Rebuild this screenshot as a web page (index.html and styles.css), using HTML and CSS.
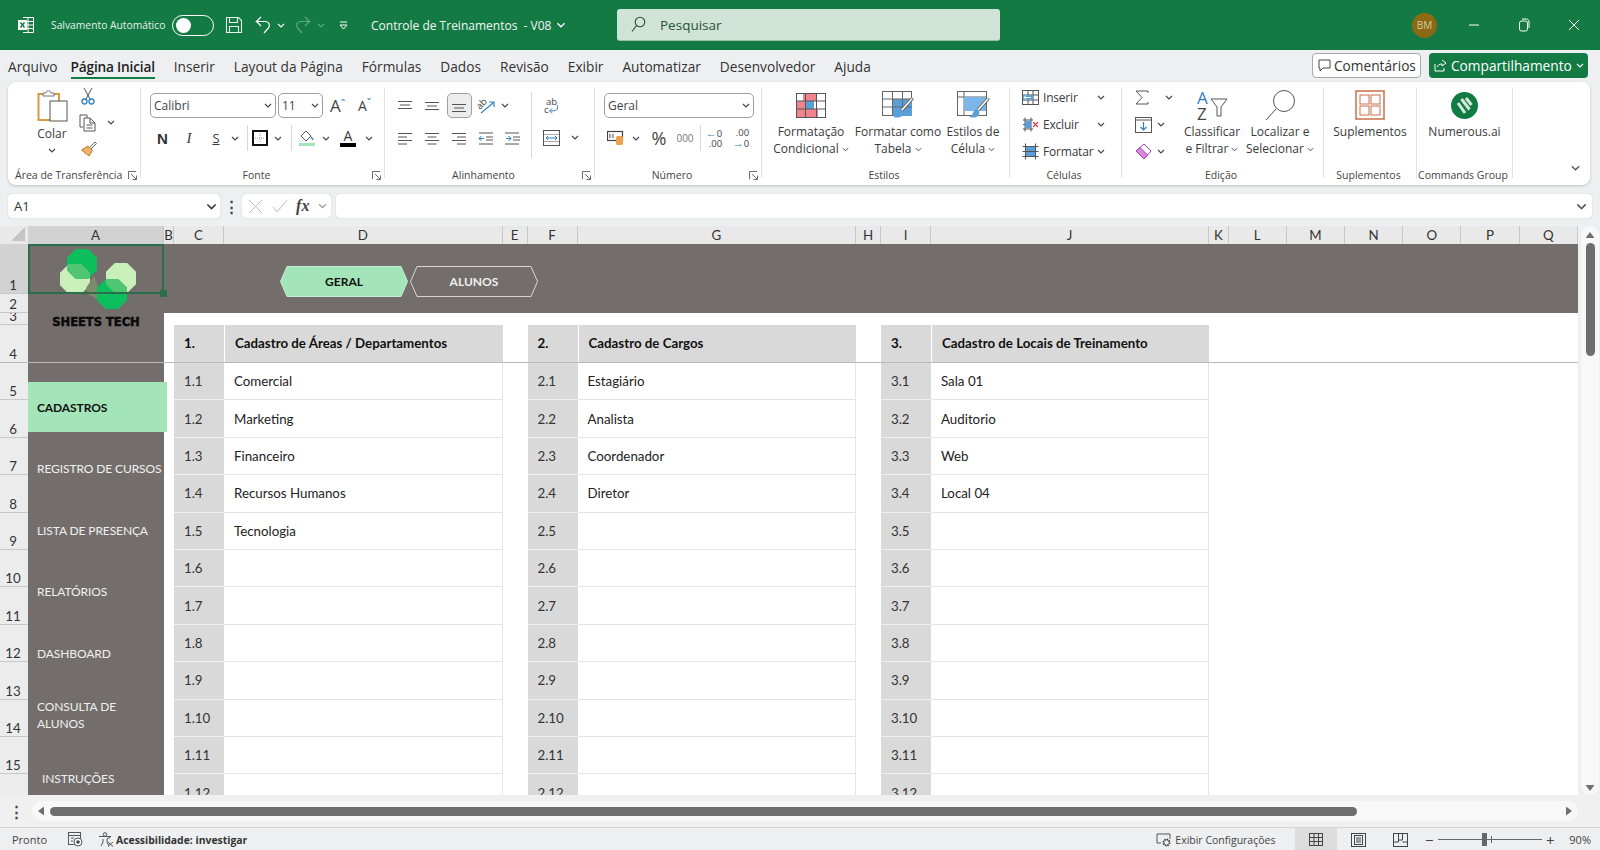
FILE: index.html
```html
<!DOCTYPE html>
<html>
<head>
  <title>Controle de Treinamentos - V08</title>
  <meta charset="UTF-8">
  <link rel="stylesheet" href="styles.css">
</head>
<body>
  <svg class="defs" width="0" height="0">
    <symbol id="chev" viewBox="0 0 8 5"><path d="M1 1l3 3 3-3" fill="none" stroke="currentColor" stroke-width="1.1"/></symbol>
    <symbol id="launch" viewBox="0 0 10 10"><path d="M.5 9V.5H9M3.5 3.5l5.5 5.5M5 9.5h4.5V5" fill="none" stroke="#555" stroke-width="1"/></symbol>
    <symbol id="brush" viewBox="0 0 20 20"><path d="M18 1L9 11" stroke="#666" stroke-width="3" stroke-linecap="round"/><path d="M18 1L9 11" stroke="#fff" stroke-width="1.4" stroke-linecap="round"/><path d="M8 10c-3 .5-3 3-4 5-.6 1-2 1.600-3 2 3 1.500 8 1 9-2 .5-1.500 .5-3-2-5z" fill="#5a9fd8"/></symbol>
  </svg>

  <div class="titlebar">
    <svg class="xl" width="18" height="18" viewBox="0 0 18 18"><path d="M6 1.500h10.500v15H6" fill="none" stroke="#fff"/><path d="M6 5.500h10.500M6 9h10.500M6 12.500h10.500M11 1.500v15" stroke="#fff"/><rect x="1" y="4" width="9" height="10" fill="#fff"/><path d="M3.500 6.500l4 5M7.500 6.500l-4 5" stroke="#107c41" stroke-width="1.400"/></svg>
    <span class="autosave">Salvamento Automático</span>
    <span class="toggle"><span class="toggle-dot"></span></span>
    <svg class="save" width="18" height="18" viewBox="0 0 18 18"><path d="M1.500 1.500h12l3 3v12h-15zM4.500 1.500v5h8v-5M4.500 16.500v-6h9v6" fill="none" stroke="#e6f2ea" stroke-width="1.100"/></svg>
    <svg class="undo" width="16" height="18" viewBox="0 0 16 18"><path d="M6 1L1.500 5.500h9c3.500 0 5 4 3 6.500L9 17M1.500 5.500L6 10" fill="none" stroke="#fff" stroke-width="1.200"/></svg>
    <svg class="tchev" width="8" height="5"><use href="#chev"/></svg>
    <svg class="redo" width="16" height="18" viewBox="0 0 16 18"><path d="M10 1l4.500 4.500h-9c-3.500 0-5 4-3 6.500L7 17M14.500 5.500L10 10" fill="none" stroke="#5fa880" stroke-width="1.200"/></svg>
    <svg class="tchev dim" width="8" height="5"><use href="#chev"/></svg>
    <svg class="qat" width="9" height="9" viewBox="0 0 9 9"><path d="M1 1h7M1 4l3.500 4L8 4z" fill="none" stroke="#fff"/></svg>
    <span class="doc-title">Controle de Treinamentos&nbsp; - V08</span>
    <svg class="tchev doc-chev" width="10" height="6"><use href="#chev"/></svg>
    <div class="search">
      <svg width="15" height="17" viewBox="0 0 15 17"><circle cx="9" cy="6" r="4.800" fill="none" stroke="#234f37" stroke-width="1.100"/><path d="M5.500 9.500L1 15.500" stroke="#234f37" stroke-width="1.100"/></svg>
      <span>Pesquisar</span>
    </div>
    <div class="win-right">
      <span class="avatar">BM</span>
      <svg class="win-btn" width="12" height="12" viewBox="0 0 12 12"><path d="M1 6h10" stroke="#fff"/></svg>
      <svg class="win-btn" width="12" height="14" viewBox="0 0 12 14"><rect x="1.500" y="3" width="8" height="10" rx="2" fill="none" stroke="#fff"/><path d="M4 1h4c2 0 3 1 3 3v6" fill="none" stroke="#fff"/></svg>
      <svg class="win-btn" width="12" height="12" viewBox="0 0 12 12"><path d="M1 1l10 10M11 1L1 11" stroke="#fff"/></svg>
    </div>
  </div>

  <div class="menubar">
    <span class="tab first">Arquivo</span>
    <span class="tab active">Página Inicial</span>
    <span class="tab">Inserir</span>
    <span class="tab">Layout da Página</span>
    <span class="tab">Fórmulas</span>
    <span class="tab">Dados</span>
    <span class="tab">Revisão</span>
    <span class="tab">Exibir</span>
    <span class="tab">Automatizar</span>
    <span class="tab">Desenvolvedor</span>
    <span class="tab">Ajuda</span>
    <div class="menu-right">
      <div class="btn-comment">
        <svg width="13" height="13" viewBox="0 0 13 13"><path d="M1 1h11v8H5l-3 3V9H1z" fill="none" stroke="#444"/></svg>
        Comentários
      </div>
      <div class="btn-share">
        <svg width="13" height="13" viewBox="0 0 13 13"><path d="M8 1l4 3-4 3V5C5 5 4 6 3.500 8M1 5v7h9V9" fill="none" stroke="#fff"/></svg>
        Compartilhamento
        <svg width="8" height="5"><use href="#chev"/></svg>
      </div>
    </div>
  </div>

  <div class="ribbon">
    <div class="grp g-clip">
      <div class="grp-body">
        <div class="big colar">
          <div class="big-ico">
            <svg width="31" height="33" viewBox="0 0 31 33"><path d="M7 5H1.500v26H13" fill="none" stroke="#d99a45" stroke-width="2"/><path d="M17 5h5v7" fill="none" stroke="#d99a45" stroke-width="2"/><path d="M6 6V4h3c0-3 5-3 5 0h3v3H6z" fill="#fff" stroke="#777"/><rect x="13" y="12" width="17" height="20" fill="#fff" stroke="#555"/></svg>
          </div>
          <div class="big-txt">Colar</div>
          <svg class="c" width="8" height="5"><use href="#chev"/></svg>
        </div>
        <div class="stack clip-stack">
          <svg width="14" height="18" viewBox="0 0 14 18"><path d="M3 1l6 11M11 1L5 12" stroke="#555"/><circle cx="3.500" cy="14.500" r="2.500" fill="none" stroke="#2f7fc1" stroke-width="1.300"/><circle cx="10.500" cy="14.500" r="2.500" fill="none" stroke="#2f7fc1" stroke-width="1.300"/></svg>
          <span></span>
          <svg width="18" height="18" viewBox="0 0 18 18"><path d="M4 13H1V1h7v3" fill="none" stroke="#555"/><path d="M5 4h6l5 5v8H5zM11 4v5h5M7.500 11h6M7.500 14h6" fill="#fff" stroke="#555"/></svg>
          <svg class="c" width="8" height="5"><use href="#chev"/></svg>
          <svg width="17" height="17" viewBox="0 0 17 17"><path d="M9 7l6-6 1.500 1.500-6 6" fill="#fff" stroke="#666"/><path d="M8 5l4.500 4.500L9 15 1.500 9z" fill="#f0b268" stroke="#b97a2c"/></svg>
          <span></span>
        </div>
      </div>
      <div class="grp-label"><span class="lab-left">Área de Transferência</span><svg class="launch" width="9" height="9"><use href="#launch"/></svg></div>
    </div>

    <div class="grp g-font">
      <div class="grp-body pad-rows">
        <div class="row font-r1">
          <div class="select sel-font">Calibri<svg class="c" width="8" height="5"><use href="#chev"/></svg></div>
          <div class="select sel-size">11<svg class="c" width="8" height="5"><use href="#chev"/></svg></div>
          <span class="grow-a">A<sup>ˆ</sup></span>
          <span class="shrink-a">A<sup>ˇ</sup></span>
        </div>
        <div class="row font-r2">
          <b class="fmt-n">N</b>
          <i class="fmt-i">I</i>
          <span class="fmt-s">S</span>
          <svg class="c" width="8" height="5"><use href="#chev"/></svg>
          <span class="vsep"></span>
          <svg width="16" height="16" viewBox="0 0 16 16"><rect x="1" y="1" width="14" height="14" fill="none" stroke="#111" stroke-width="2"/><path d="M8 3v10M3 8h10" stroke="#999" stroke-dasharray="1 1"/></svg>
          <svg class="c" width="8" height="5"><use href="#chev"/></svg>
          <span class="vsep"></span>
          <svg width="18" height="18" viewBox="0 0 18 18"><path d="M8 2l5 5-5 5-5-5z" fill="none" stroke="#555"/><path d="M13 8c1 1 2 2 2 3" stroke="#2f7fc1" stroke-width="1.300" fill="none"/><rect x="1" y="14" width="16" height="3" fill="#a3e4b8"/></svg>
          <svg class="c" width="8" height="5"><use href="#chev"/></svg>
          <span class="font-color">A</span>
          <svg class="c" width="8" height="5"><use href="#chev"/></svg>
        </div>
      </div>
      <div class="grp-label"><span class="lab-mid">Fonte</span><svg class="launch" width="9" height="9"><use href="#launch"/></svg></div>
    </div>

    <div class="grp g-align">
      <div class="grp-body">
        <div class="align-left">
          <div class="row align-r1">
            <svg width="14" height="12" viewBox="0 0 14 12"><path d="M0 1.500h14M2 5h10M0 8.500h14" stroke="#555"/></svg>
            <svg width="14" height="12" viewBox="0 0 14 12"><path d="M0 2.500h14M2 6h10M0 9.500h14" stroke="#555"/></svg>
            <span class="hl-btn"><svg width="14" height="12" viewBox="0 0 14 12"><path d="M0 4.500h14M2 8h10M0 11.500h14" stroke="#555"/></svg></span>
            <svg class="open" width="18" height="16" viewBox="0 0 18 16"><text x="0" y="9" class="orient-t" transform="rotate(-45 5 7)">ab</text><path d="M4 15L16 5M12 4h5v5" fill="none" stroke="#2f7fc1" stroke-width="1.200"/></svg>
            <svg class="c" width="8" height="5"><use href="#chev"/></svg>
          </div>
          <div class="row align-r2">
            <svg width="14" height="13" viewBox="0 0 14 13"><path d="M0 1.500h14M0 5h9M0 8.500h14M0 12h9" stroke="#555"/></svg>
            <svg width="14" height="13" viewBox="0 0 14 13"><path d="M0 1.500h14M2.500 5h9M0 8.500h14M2.500 12h9" stroke="#555"/></svg>
            <svg width="14" height="13" viewBox="0 0 14 13"><path d="M0 1.500h14M5 5h9M0 8.500h14M5 12h9" stroke="#555"/></svg>
            <svg width="15" height="13" viewBox="0 0 15 13"><path d="M1 1h14M8 5h7M8 8h7M1 12h14" stroke="#555"/><path d="M6 6.500H1M3.500 4L1 6.500 3.500 9" fill="none" stroke="#2f7fc1"/></svg>
            <svg width="15" height="13" viewBox="0 0 15 13"><path d="M0 1h14M8 5h7M8 8h7M0 12h14" stroke="#555"/><path d="M1 6.500h5M3.500 4L6 6.500 3.500 9" fill="none" stroke="#2f7fc1"/></svg>
          </div>
        </div>
        <span class="vsep tall"></span>
        <div class="align-right">
          <svg class="open" width="16" height="18" viewBox="0 0 16 18"><text x="3" y="8" class="wrap-t">ab</text><text x="1" y="16" class="wrap-t">c</text><path d="M14 8c2 5-1 6-7 6M9 11.500L6.500 14 9 16.500" fill="none" stroke="#2f7fc1"/></svg>
          <span></span>
          <svg width="17" height="16" viewBox="0 0 17 16"><rect x=".5" y=".5" width="16" height="15" fill="none" stroke="#555"/><path d="M.5 5h16M.5 11h16" stroke="#555"/><rect x="1" y="5" width="15" height="6" fill="#fff"/><path d="M3 8h11M5 6L3 8l2 2M12 6l2 2-2 2" fill="none" stroke="#2f7fc1"/></svg>
          <svg class="c" width="8" height="5"><use href="#chev"/></svg>
        </div>
      </div>
      <div class="grp-label"><span class="lab-mid">Alinhamento</span><svg class="launch" width="9" height="9"><use href="#launch"/></svg></div>
    </div>

    <div class="grp g-num">
      <div class="grp-body pad-rows">
        <div class="row num-r1"><div class="select sel-num">Geral<svg class="c" width="8" height="5"><use href="#chev"/></svg></div></div>
        <div class="row num-r2">
          <svg width="18" height="16" viewBox="0 0 18 16"><rect x=".5" y="1.500" width="15" height="9" fill="none" stroke="#444" stroke-width="1.200"/><path d="M3 4v4M6 4v4" stroke="#444"/><rect x="9" y="6" width="7" height="9" rx="1.500" fill="#eda24a"/></svg>
          <svg class="c" width="8" height="5"><use href="#chev"/></svg>
          <span class="pct">%</span>
          <span class="thou">000</span>
          <span class="vsep"></span>
          <span class="dec"><span class="dec-a">←</span>0<br>.00</span>
          <span class="dec">.00<br><span class="dec-a">→</span>0</span>
        </div>
      </div>
      <div class="grp-label"><span class="lab-mid">Número</span><svg class="launch" width="9" height="9"><use href="#launch"/></svg></div>
    </div>

    <div class="grp g-style">
      <div class="grp-body">
        <div class="big b-cond">
          <div class="big-ico">
            <svg width="30" height="25" viewBox="0 0 30 25"><rect x=".5" y=".5" width="29" height="24" fill="#fff" stroke="#555"/><rect x="7" y="1" width="13" height="7" fill="#f0848c"/><rect x="1" y="8" width="8" height="8" fill="#f0848c"/><rect x="9" y="8" width="9" height="8" fill="#5a9fd8"/><rect x="1" y="16" width="21" height="8" fill="#f0848c"/><path d="M.5 8h29M.5 16h29M9.500 .5v24M20.500 .5v24" stroke="#555"/></svg>
          </div>
          <div class="big-txt">Formatação<br>Condicional <svg width="7" height="5"><use href="#chev"/></svg></div>
        </div>
        <div class="big b-tab">
          <div class="big-ico">
            <svg width="32" height="29" viewBox="0 0 32 29"><rect x=".5" y=".5" width="29" height="24" fill="#fff" stroke="#666"/><rect x="11" y="8" width="19" height="17" fill="#5a9fd8"/><path d="M.5 8h29M.5 16h29M10.500 .5v24M20.500 .5v24" stroke="#666"/><use href="#brush" x="10" y="7" width="22" height="22"/></svg>
          </div>
          <div class="big-txt">Formatar como<br>Tabela <svg width="7" height="5"><use href="#chev"/></svg></div>
        </div>
        <div class="big b-cell">
          <div class="big-ico">
            <svg width="33" height="29" viewBox="0 0 33 29"><rect x=".5" y=".5" width="29" height="24" fill="#fff" stroke="#666"/><path d="M.5 6h29M7 .5v24" stroke="#666"/><rect x="7" y="6" width="22" height="14" fill="#7db6e6"/><use href="#brush" x="11" y="7" width="22" height="22"/></svg>
          </div>
          <div class="big-txt">Estilos de<br>Célula <svg width="7" height="5"><use href="#chev"/></svg></div>
        </div>
      </div>
      <div class="grp-label"><span class="lab-mid">Estilos</span></div>
    </div>

    <div class="grp g-cells">
      <div class="grp-body">
        <div class="stack cells-stack">
          <svg width="17" height="15" viewBox="0 0 17 15"><rect x=".5" y=".5" width="16" height="14" fill="#fff" stroke="#555"/><path d="M.5 5h16M.5 10h16M6 .5v14M11 .5v14" stroke="#555"/><rect x="1" y="5" width="10" height="5" fill="#5a9fd8"/><path d="M9 7.500H2M4 5.500l-2 2 2 2" fill="none" stroke="#fff"/></svg>
          <span>Inserir</span>
          <svg class="c" width="8" height="5"><use href="#chev"/></svg>
          <svg width="17" height="15" viewBox="0 0 17 15"><path d="M1 3h10M1 12h10M3 .5v14M9 .5v14M1 7.500h7" stroke="#555" fill="none"/><rect x="3" y="4" width="6" height="7" fill="#5a9fd8"/><path d="M11 5l5 5M16 5l-5 5" stroke="#d8434a" stroke-width="1.200"/></svg>
          <span>Excluir</span>
          <svg class="c" width="8" height="5"><use href="#chev"/></svg>
          <svg width="17" height="17" viewBox="0 0 17 17"><rect x="3.500" y="3.500" width="10" height="10" fill="#5a9fd8" stroke="#555"/><path d="M.5 3.500h16M.5 8.500h16M.5 13.500h16M3.500 .5v16M13.500 .5v16" stroke="#555"/></svg>
          <span>Formatar</span>
          <svg class="c" width="8" height="5"><use href="#chev"/></svg>
        </div>
      </div>
      <div class="grp-label"><span class="lab-mid">Células</span></div>
    </div>

    <div class="grp g-edit">
      <div class="grp-body">
        <div class="stack edit-stack">
          <svg width="14" height="15" viewBox="0 0 14 15"><path d="M13 3V1H1l6 6.500L1 14h12v-2" fill="none" stroke="#555"/></svg>
          <svg class="c sum-c" width="8" height="5"><use href="#chev"/></svg>
          <svg width="17" height="16" viewBox="0 0 17 16"><rect x=".5" y=".5" width="16" height="15" fill="#fff" stroke="#555"/><path d="M.5 3h16" stroke="#555"/><path d="M8.500 5v8M5.500 10l3 3 3-3" fill="none" stroke="#2f7fc1" stroke-width="1.200"/></svg>
          <svg class="c" width="8" height="5"><use href="#chev"/></svg>
          <svg width="17" height="17" viewBox="0 0 17 17"><path d="M9 1l7 7-7 8-8-8z" fill="#fff" stroke="#a53fb0"/><path d="M5 4.500l7.500 7.500L9 16 1 8z" fill="#d889de" stroke="#a53fb0"/></svg>
          <svg class="c" width="8" height="5"><use href="#chev"/></svg>
        </div>
        <div class="big b-sort">
          <div class="big-ico">
            <svg class="open" width="31" height="31" viewBox="0 0 31 31"><text x="0" y="14" class="az az-a">A</text><text x="0" y="30" class="az">Z</text><path d="M14 9h16l-6 8v9h-4v-9z" fill="none" stroke="#555"/></svg>
          </div>
          <div class="big-txt">Classificar<br>e Filtrar <svg width="7" height="5"><use href="#chev"/></svg></div>
        </div>
        <div class="big b-find">
          <div class="big-ico">
            <svg width="31" height="31" viewBox="0 0 31 31"><circle cx="19" cy="11" r="10.500" fill="none" stroke="#555"/><path d="M11 19L1 30" stroke="#555"/></svg>
          </div>
          <div class="big-txt">Localizar e<br>Selecionar <svg width="7" height="5"><use href="#chev"/></svg></div>
        </div>
      </div>
      <div class="grp-label"><span class="lab-mid">Edição</span></div>
    </div>

    <div class="grp g-addin">
      <div class="grp-body">
        <div class="big b-addin">
          <div class="big-ico">
            <svg width="30" height="30" viewBox="0 0 30 30"><rect x="1" y="1" width="28" height="28" fill="#fff" stroke="#c9704a" stroke-width="1.500"/><rect x="5" y="5" width="9" height="9" fill="none" stroke="#c9704a"/><rect x="16" y="5" width="9" height="9" fill="none" stroke="#c9704a"/><rect x="5" y="16" width="9" height="9" fill="none" stroke="#c9704a"/><rect x="16" y="16" width="9" height="9" fill="none" stroke="#c9704a"/></svg>
          </div>
          <div class="big-txt">Suplementos</div>
        </div>
      </div>
      <div class="grp-label"><span class="lab-mid">Suplementos</span></div>
    </div>

    <div class="grp g-cmd">
      <div class="grp-body">
        <div class="big b-cmd">
          <div class="big-ico">
            <svg width="27" height="27" viewBox="0 0 27 27"><circle cx="13.500" cy="13.500" r="13.500" fill="#107c41"/><path d="M7 11l7 10M10.500 7l8 10.500M15 6l5.500 7" fill="none" stroke="#d5e8dc" stroke-width="3"/></svg>
          </div>
          <div class="big-txt">Numerous.ai</div>
        </div>
      </div>
      <div class="grp-label"><span class="lab-mid">Commands Group</span></div>
    </div>

    <div class="grp-end"><svg width="11" height="6"><use href="#chev"/></svg></div>
  </div>

  <div class="formulabar">
    <div class="namebox">A1<svg width="11" height="7"><use href="#chev"/></svg></div>
    <span class="dots">⋮</span>
    <div class="fxbox">
      <svg width="15" height="15" viewBox="0 0 15 15"><path d="M1 1l13 13M14 1L1 14" stroke="#bbb"/></svg>
      <svg width="16" height="14" viewBox="0 0 16 14"><path d="M1 8l4 5L15 1" fill="none" stroke="#bbb"/></svg>
      <i class="fx">fx</i>
      <svg width="9" height="6"><use href="#chev"/></svg>
    </div>
    <div class="fxinput"><svg width="13" height="7"><use href="#chev"/></svg></div>
  </div>

  <div class="sheet-row">
    <div class="sheet">
      <div class="corner"><span class="corner-tri"></span></div>
      <div class="ch sel">A</div><div class="ch">B</div><div class="ch">C</div><div class="ch">D</div><div class="ch">E</div><div class="ch">F</div><div class="ch">G</div><div class="ch">H</div><div class="ch">I</div><div class="ch">J</div><div class="ch">K</div><div class="ch">L</div><div class="ch">M</div><div class="ch">N</div><div class="ch">O</div><div class="ch">P</div><div class="ch">Q</div>

      <div class="band">
        <div class="nav-tab on">
          <svg viewBox="0 0 128 31" preserveAspectRatio="none"><polygon points="7,.5 121,.5 127.500,15.500 121,30.500 7,30.500 .5,15.500" fill="#a3e4b8" stroke="#c5efd2"/></svg>
          <span>GERAL</span>
        </div>
        <div class="nav-tab">
          <svg viewBox="0 0 128 31" preserveAspectRatio="none"><polygon points="7,.5 121,.5 127.500,15.500 121,30.500 7,30.500 .5,15.500" fill="none" stroke="#d8d6d4"/></svg>
          <span>ALUNOS</span>
        </div>
      </div>

      <div class="side">
        <svg class="logo" width="137" height="70" viewBox="0 0 137 70">
          <defs>
            <polygon id="oct" points="-6.200,-15 6.200,-15 15,-6.200 15,6.200 6.200,15 -6.200,15 -15,6.200 -15,-6.200"/>
            <clipPath id="clipL"><use href="#oct" x="47" y="35"/></clipPath>
            <clipPath id="clipR"><use href="#oct" x="93" y="34"/></clipPath>
          </defs>
          <use href="#oct" x="47" y="35" fill="#c9efbb"/>
          <use href="#oct" x="93" y="34" fill="#c9efbb"/>
          <polygon points="58,44 66,32 72,47 70,56 60,50" fill="#7e8b6a"/>
          <use href="#oct" x="54" y="20" fill="#0cbf5c"/>
          <use href="#oct" x="84" y="50" fill="#0cbf5c"/>
          <g clip-path="url(#clipL)"><use href="#oct" x="54" y="20" fill="#50c672"/></g>
          <g clip-path="url(#clipR)"><use href="#oct" x="84" y="50" fill="#50c672"/></g>
        </svg>
        <div class="brand">SHEETS TECH</div>
        <div class="nav on">CADASTROS</div>
        <div class="nav">REGISTRO DE CURSOS</div>
        <div class="nav">LISTA DE PRESENÇA</div>
        <div class="nav">RELATÓRIOS</div>
        <div class="nav">DASHBOARD</div>
        <div class="nav">CONSULTA DE<br>ALUNOS</div>
        <div class="nav indent">INSTRUÇÕES</div>
      </div>

      <div class="rh sel">1</div>
      <div class="rh">2</div>
      <div class="rh">3</div>

      <div class="rh">4</div>
      <div class="hn c-c">1.</div><div class="ht c-d">Cadastro de Áreas / Departamentos</div>
      <div class="hn c-f">2.</div><div class="ht c-g">Cadastro de Cargos</div>
      <div class="hn c-i">3.</div><div class="ht c-j">Cadastro de Locais de Treinamento</div>

      <div class="rh">5</div>
      <div class="cn c-c">1.1</div><div class="ct c-d">Comercial</div>
      <div class="cn c-f">2.1</div><div class="ct c-g">Estagiário</div>
      <div class="cn c-i">3.1</div><div class="ct c-j">Sala 01</div>

      <div class="rh">6</div>
      <div class="cn c-c">1.2</div><div class="ct c-d">Marketing</div>
      <div class="cn c-f">2.2</div><div class="ct c-g">Analista</div>
      <div class="cn c-i">3.2</div><div class="ct c-j">Auditorio</div>

      <div class="rh">7</div>
      <div class="cn c-c">1.3</div><div class="ct c-d">Financeiro</div>
      <div class="cn c-f">2.3</div><div class="ct c-g">Coordenador</div>
      <div class="cn c-i">3.3</div><div class="ct c-j">Web</div>

      <div class="rh">8</div>
      <div class="cn c-c">1.4</div><div class="ct c-d">Recursos Humanos</div>
      <div class="cn c-f">2.4</div><div class="ct c-g">Diretor</div>
      <div class="cn c-i">3.4</div><div class="ct c-j">Local 04</div>

      <div class="rh">9</div>
      <div class="cn c-c">1.5</div><div class="ct c-d">Tecnologia</div>
      <div class="cn c-f">2.5</div><div class="ct c-g"></div>
      <div class="cn c-i">3.5</div><div class="ct c-j"></div>

      <div class="rh">10</div>
      <div class="cn c-c">1.6</div><div class="ct c-d"></div>
      <div class="cn c-f">2.6</div><div class="ct c-g"></div>
      <div class="cn c-i">3.6</div><div class="ct c-j"></div>

      <div class="rh">11</div>
      <div class="cn c-c">1.7</div><div class="ct c-d"></div>
      <div class="cn c-f">2.7</div><div class="ct c-g"></div>
      <div class="cn c-i">3.7</div><div class="ct c-j"></div>

      <div class="rh">12</div>
      <div class="cn c-c">1.8</div><div class="ct c-d"></div>
      <div class="cn c-f">2.8</div><div class="ct c-g"></div>
      <div class="cn c-i">3.8</div><div class="ct c-j"></div>

      <div class="rh">13</div>
      <div class="cn c-c">1.9</div><div class="ct c-d"></div>
      <div class="cn c-f">2.9</div><div class="ct c-g"></div>
      <div class="cn c-i">3.9</div><div class="ct c-j"></div>

      <div class="rh">14</div>
      <div class="cn c-c">1.10</div><div class="ct c-d"></div>
      <div class="cn c-f">2.10</div><div class="ct c-g"></div>
      <div class="cn c-i">3.10</div><div class="ct c-j"></div>

      <div class="rh">15</div>
      <div class="cn c-c">1.11</div><div class="ct c-d"></div>
      <div class="cn c-f">2.11</div><div class="ct c-g"></div>
      <div class="cn c-i">3.11</div><div class="ct c-j"></div>

      <div class="rh"></div>
      <div class="cn c-c last">1.12</div><div class="ct c-d"></div>
      <div class="cn c-f last">2.12</div><div class="ct c-g"></div>
      <div class="cn c-i last">3.12</div><div class="ct c-j"></div>

      <div class="rule"></div>
      <div class="cell-sel"><span class="cell-handle"></span></div>
    </div>
    <div class="vscroll">
      <span class="arrow-up"></span>
      <span class="vthumb"></span>
      <span class="arrow-down"></span>
    </div>
  </div>

  <div class="hbar">
    <span class="dots hdots">⋮</span>
    <div class="htrack">
      <span class="arrow-left"></span>
      <span class="hthumb"></span>
      <span class="arrow-right"></span>
    </div>
  </div>

  <div class="statusbar">
    <span class="st-ready">Pronto</span>
    <svg class="st-macro" width="15" height="15" viewBox="0 0 15 15"><rect x=".5" y=".5" width="12" height="12" fill="none" stroke="#555"/><path d="M.5 3.500h12M3 6h3M3 9h2" stroke="#555"/><circle cx="10" cy="10" r="4" fill="#fff" stroke="#555"/><circle cx="10" cy="10" r="1.800" fill="#444"/></svg>
    <svg class="st-acc" width="16" height="15" viewBox="0 0 16 15"><circle cx="7" cy="2.500" r="1.800" fill="none" stroke="#555"/><path d="M1 4.500h12L9 7v3l2 4M5 7v3l-2 4" fill="none" stroke="#555"/><path d="M10 10l5 4.500M15 10l-5 4.500" stroke="#555"/></svg>
    <b class="st-acc-t">Acessibilidade: investigar</b>
    <div class="st-right">
      <svg width="16" height="14" viewBox="0 0 16 14"><path d="M5 10H1V1h13v5" fill="none" stroke="#555"/><circle cx="10.500" cy="9.500" r="3" fill="none" stroke="#333" stroke-width="1.800" stroke-dasharray="1.500 .8"/></svg>
      <span class="st-view">Exibir Configurações</span>
      <span class="view-btn on"><svg width="14" height="13" viewBox="0 0 14 13"><rect x=".5" y=".5" width="13" height="12" fill="none" stroke="#444"/><path d="M5 .5v12M9.500 .5v12M.5 4.500h13M.5 8.500h13" stroke="#444"/></svg></span>
      <span class="view-btn"><svg width="15" height="14" viewBox="0 0 15 14"><rect x=".5" y=".5" width="14" height="13" fill="none" stroke="#444"/><rect x="3.500" y="2.500" width="8" height="9" fill="none" stroke="#444"/><path d="M5 5h5M5 7h5M5 9h5" stroke="#444"/></svg></span>
      <span class="view-btn"><svg width="15" height="14" viewBox="0 0 15 14"><rect x=".5" y=".5" width="14" height="13" fill="none" stroke="#444"/><path d="M.5 9h5V.5M5.500 7h4V.5M9.500 9h5" fill="none" stroke="#444"/></svg></span>
      <span class="zoom-sign minus">−</span>
      <span class="slider"><span class="slider-mid"></span><span class="slider-knob"></span></span>
      <span class="zoom-sign">+</span>
      <span class="zoom-pct">90%</span>
    </div>
  </div>
</body>
</html>
```

FILE: styles.css
```css
* {
  margin: 0;
  padding: 0;
  box-sizing: border-box;
}

body {
  width: 1600px;
  height: 850px;
  overflow: hidden;
  font-family: "Open Sans", "Noto Sans", sans-serif;
  font-size: 12px;
  color: #3a3a3a;
  background: #eeeff1;
}

svg {
  flex-shrink: 0;
  display: block;
}

svg.open {
  overflow: visible;
}

.defs {
  position: absolute;
}

/* title bar */
.titlebar {
  height: 50px;
  background: #137a44;
  color: #fff;
  display: flex;
  align-items: center;
  padding-left: 17px;
}

.autosave {
  margin-left: 16px;
  width: 114px;
  font-size: 10.300px;
  white-space: nowrap;
  color: #e4f0e9;
}

.toggle {
  margin-left: 7px;
  width: 42px;
  height: 21px;
  border: 1px solid #fff;
  border-radius: 11px;
  padding: 2px 0 0 2px;
}

.toggle-dot {
  display: block;
  width: 15px;
  height: 15px;
  margin-left: 1px;
  border-radius: 50%;
  background: #fff;
}

.save {
  margin-left: 11px;
}

.undo {
  margin-left: 12px;
}

.tchev {
  margin-left: 6px;
  color: #fff;
}

.redo {
  margin-left: 10px;
}

.tchev.dim {
  color: #5fa880;
}

.qat {
  margin-left: 14px;
}

.doc-title {
  margin-left: 23px;
  width: 185px;
  font-size: 12px;
  white-space: nowrap;
  color: #f2f7f4;
}

.doc-chev {
  margin-left: 0;
}

.search {
  margin-left: 51px;
  width: 383px;
  height: 32px;
  background: #cfe3d6;
  border-radius: 3px;
  border-bottom: 1px solid #9dbdaa;
  display: flex;
  align-items: center;
  padding-left: 14px;
  gap: 14px;
  color: #27543b;
  font-size: 13.500px;
}

.win-right {
  margin-left: auto;
  display: flex;
  align-items: center;
}

.avatar {
  width: 25px;
  height: 25px;
  margin-right: 31px;
  border-radius: 50%;
  background: #8c6a14;
  color: #d5c8a0;
  font-size: 10px;
  display: flex;
  align-items: center;
  justify-content: center;
}

.win-btn {
  margin-right: 38px;
}

.win-btn:last-child {
  margin-right: 20px;
}

/* tabs */
.menubar {
  height: 32px;
  display: flex;
  align-items: flex-start;
  font-size: 13.700px;
  color: #333;
  padding: 1px 0 0 8px;
  gap: 19px;
}

.tab {
  white-space: nowrap;
  line-height: 32px;
  height: 28px;
}

.tab.first {
  margin-right: -6px;
}

.tab.active {
  font-weight: 600;
  letter-spacing: -0.2px;
  color: #222;
  border-bottom: 2px solid #107c41;
}

.menu-right {
  margin-left: auto;
  display: flex;
  gap: 8px;
  padding-right: 12px;
  padding-top: 2px;
}

.btn-comment,
.btn-share {
  height: 25px;
  border-radius: 4px;
  display: flex;
  align-items: center;
  white-space: nowrap;
}

.btn-comment {
  width: 109px;
  background: #fff;
  border: 1px solid #a8a8a8;
  padding-left: 5px;
  gap: 3px;
}

.btn-share {
  width: 159px;
  background: #137a44;
  color: #fff;
  padding-left: 5px;
  gap: 4px;
}

/* ribbon */
.ribbon {
  height: 103px;
  margin: 0 10px 0 8px;
  background: #fff;
  border-radius: 8px;
  box-shadow: 0 1px 3px rgba(0, 0, 0, 0.2);
  display: flex;
}

.grp {
  position: relative;
  display: flex;
  flex-direction: column;
}

.grp::after {
  content: "";
  position: absolute;
  right: 0;
  top: 6px;
  bottom: 7px;
  width: 1px;
  background: #e2e2e2;
}

.g-clip { width: 133px; }
.g-font { width: 244px; }
.g-align { width: 210px; }
.g-num { width: 167px; }
.g-style { width: 248px; }
.g-cells { width: 112px; }
.g-edit { width: 202px; }
.g-addin { width: 93px; }
.g-cmd { width: 96px; }

.grp-end {
  flex: 1;
  display: flex;
  align-items: flex-end;
  justify-content: flex-end;
  padding: 0 9px 14px 0;
  color: #555;
}

.grp-body {
  height: 84px;
  display: flex;
}

.grp-label {
  height: 18px;
  display: flex;
  align-items: center;
  font-size: 10.500px;
  color: #444;
  padding-right: 4px;
}

.lab-left {
  padding-left: 7px;
  flex: 1;
  white-space: nowrap;
}

.lab-mid {
  flex: 1;
  text-align: center;
  white-space: nowrap;
}

.c {
  color: #444;
}

.vsep {
  width: 1px;
  height: 26px;
  background: #d8d8d8;
}

.vsep.tall {
  height: 66px;
  margin-top: 10px;
}

.big {
  display: flex;
  flex-direction: column;
  align-items: center;
  text-align: center;
}

.big-ico {
  height: 42px;
  padding-top: 4px;
  display: flex;
  align-items: center;
  justify-content: center;
}

.big-txt {
  line-height: 16.500px;
  white-space: nowrap;
}

.big-txt svg {
  display: inline-block;
  vertical-align: 1px;
  color: #444;
}

.stack {
  display: grid;
  align-items: center;
  justify-items: center;
  grid-auto-rows: 27px;
}

.row {
  display: grid;
  align-items: center;
  justify-items: center;
}

.select {
  height: 25px;
  background: #fff;
  border: 1px solid #9e9e9e;
  border-radius: 5px;
  padding: 0 3px;
  display: flex;
  align-items: center;
  justify-content: space-between;
  color: #444;
}

.pad-rows {
  flex-direction: column;
  padding-top: 11px;
  padding-left: 9px;
}

/* clipboard */
.colar {
  width: 34px;
  margin-left: 27px;
}

.colar .big-txt {
  margin-top: 2px;
  margin-bottom: 5px;
}

.clip-stack {
  margin-left: 9px;
  grid-template-columns: 20px 26px;
}

/* font */
.font-r1 {
  display: flex;
  height: 25px;
}

.sel-font {
  width: 126px;
}

.sel-size {
  width: 45px;
  margin-left: 2px;
}

.grow-a,
.shrink-a {
  color: #444;
  white-space: nowrap;
}

.grow-a {
  margin-left: 7px;
  width: 28px;
  font-size: 17px;
}

.shrink-a {
  width: 20px;
  font-size: 14px;
}

sup {
  font-size: 11px;
  color: #2f7fc1;
  line-height: 0;
  vertical-align: 4px;
}

.font-r2 {
  margin-top: 7px;
  height: 26px;
  grid-template-columns: 25px 28px 26px 12px 12px 14px 22px 4px 28px 10px 34px 8px;
}

.fmt-n {
  font-family: "Liberation Sans", sans-serif;
  font-size: 15px;
  color: #333;
}

.fmt-i {
  font-family: "Liberation Serif", serif;
  font-size: 15px;
}

.fmt-s {
  text-decoration: underline;
  font-size: 13px;
}

.font-color {
  width: 16px;
  text-align: center;
  font-size: 14px;
  line-height: 14px;
  border-bottom: 4px solid #000;
}

/* alignment */
.align-left {
  width: 146px;
  padding: 11px 0 0 7px;
}

.align-r1 {
  height: 25px;
  grid-template-columns: 26px 28px 26px 28px 10px;
}

.hl-btn {
  width: 25px;
  height: 25px;
  background: #ececec;
  border: 1px solid #9e9e9e;
  border-radius: 5px;
  display: flex;
  align-items: center;
  justify-content: center;
}

.align-r2 {
  margin-top: 7px;
  height: 26px;
  grid-template-columns: 26px 28px 26px 26px 28px;
}

.align-right {
  padding: 11px 0 0 8px;
  display: grid;
  grid-template-columns: 22px 26px;
  grid-auto-rows: 25px;
  row-gap: 7px;
  align-items: center;
  justify-items: center;
  align-content: start;
}

.wrap-t,
.orient-t {
  font-size: 9.500px;
  fill: #444;
}

/* number */
.num-r1 {
  display: flex;
  height: 25px;
}

.sel-num {
  width: 150px;
}

.num-r2 {
  margin-top: 7px;
  height: 26px;
  grid-template-columns: 24px 16px 30px 22px 8px 20px 34px;
}

.pct {
  font-size: 18px;
  color: #444;
}

.thou {
  font-size: 10px;
  color: #777;
}

.dec {
  font-size: 9.500px;
  line-height: 10px;
  color: #444;
  white-space: nowrap;
  text-align: right;
}

.dec-a {
  font-size: 11px;
  line-height: 10px;
  color: #2f7fc1;
}

/* styles */
.b-cond {
  width: 90px;
  margin-left: 4px;
}

.b-tab {
  width: 84px;
}

.b-cell {
  width: 66px;
}

/* cells */
.cells-stack {
  padding-top: 2px;
  margin-left: 12px;
  grid-template-columns: 21px 52px 12px;
  justify-items: start;
}

.cells-stack span {
  letter-spacing: -0.2px;
}

.cells-stack .c {
  justify-self: center;
}

/* editing */
.edit-stack {
  margin-left: 13px;
  padding-top: 2px;
  width: 45px;
  grid-template-columns: 20px 25px;
  justify-items: start;
}

.edit-stack .c {
  margin-left: 2px;
}

.edit-stack .sum-c {
  margin-left: 10px;
}

.b-sort {
  width: 64px;
}

.b-find {
  width: 72px;
}

.az {
  font-size: 17px;
  fill: #444;
}

.az-a {
  fill: #2f7fc1;
}

.b-addin,
.b-cmd {
  width: 100%;
  padding-right: 1px;
}

/* formula bar */
.formulabar {
  height: 24px;
  margin: 9px 8px 8px;
  display: flex;
  align-items: center;
  color: #555;
}

.namebox {
  width: 212px;
  height: 24px;
  background: #fff;
  border-radius: 4px;
  font-size: 13px;
  color: #333;
  padding: 0 3px 0 6px;
  display: flex;
  align-items: center;
  justify-content: space-between;
  box-shadow: 0 0 1px rgba(0, 0, 0, 0.3);
}

.dots {
  width: 22px;
  text-align: center;
  font-size: 15px;
  font-weight: 700;
  color: #444;
}

.fxbox {
  width: 89px;
  height: 24px;
  background: #fff;
  border-radius: 4px;
  display: flex;
  align-items: center;
  justify-content: space-between;
  padding: 0 4px 0 6px;
  box-shadow: 0 0 1px rgba(0, 0, 0, 0.3);
  color: #999;
}

.fx {
  font-family: "Liberation Serif", serif;
  font-size: 16px;
  font-weight: 700;
  color: #444;
}

.fxinput {
  flex: 1;
  height: 24px;
  margin-left: 5px;
  background: #fff;
  border-radius: 4px;
  display: flex;
  align-items: center;
  justify-content: flex-end;
  padding-right: 4px;
  box-shadow: 0 0 1px rgba(0, 0, 0, 0.3);
}

/* sheet */
.sheet-row {
  height: 569px;
  display: flex;
}

.sheet {
  position: relative;
  width: 1578px;
  height: 569px;
  overflow: hidden;
  background: #fff;
  font-family: Lato, "Liberation Sans", sans-serif;
  font-size: 13.300px;
  color: #222;
  display: grid;
  grid-template-columns: 28px 136px 10px 50px 278.500px 25px 50px 278.500px 25px 50px 278px 19.600px repeat(6, 58.230px);
  grid-template-rows: 18px 50px 19px 12px 38px repeat(12, 37.400px);
}

.corner {
  background: #e9e9e9;
  display: flex;
  align-items: flex-end;
  justify-content: flex-end;
  padding: 0 3px 3px 0;
}

.corner-tri {
  width: 14px;
  height: 14px;
  background: #c4c4c4;
  clip-path: polygon(100% 0, 100% 100%, 0 100%);
}

.ch {
  background: #e9e9e9;
  border-right: 1px solid #c8c8c8;
  text-align: center;
  line-height: 18px;
  color: #333;
  overflow: hidden;
}

.ch.sel {
  background: #d2d2d2;
}

.rh {
  grid-column: 1;
  background: #ececec;
  border-bottom: 1px solid #c8c8c8;
  padding-right: 2px;
  padding-bottom: 2px;
  color: #333;
  line-height: 12px;
  display: flex;
  align-items: flex-end;
  justify-content: center;
  overflow: hidden;
}

.rh.sel {
  background: #d2d2d2;
}

.band {
  grid-column: 3 / -1;
  grid-row: 2 / 4;
  background: #736e6c;
  display: flex;
  gap: 2px;
  padding: 22px 0 0 116px;
}

.nav-tab {
  position: relative;
  width: 128px;
  height: 31px;
  display: flex;
  align-items: center;
  justify-content: center;
  font-size: 12px;
  font-weight: 700;
  color: #eeeeee;
}

.nav-tab svg {
  position: absolute;
  left: 0;
  top: 0;
  width: 100%;
  height: 100%;
}

.nav-tab span {
  position: relative;
}

.nav-tab.on {
  color: #111;
}

.side {
  grid-column: 2;
  grid-row: 2 / 18;
  background: #736e6c;
  z-index: 1;
  display: flex;
  flex-direction: column;
}

.logo {
  overflow: visible;
}

.brand {
  height: 16px;
  line-height: 16px;
  text-align: center;
  font-family: "DejaVu Sans", sans-serif;
  font-size: 11.500px;
  font-weight: 700;
  color: #0a0a0a;
  -webkit-text-stroke: 0.5px #0a0a0a;
  white-space: nowrap;
  margin-bottom: 52px;
}

.nav {
  height: 50px;
  width: 139px;
  flex-shrink: 0;
  margin-bottom: 11.600px;
  padding-left: 9px;
  display: flex;
  align-items: center;
  font-size: 12px;
  letter-spacing: -0.1px;
  line-height: 17px;
  color: #f0f0f0;
  white-space: nowrap;
}

.nav.on {
  background: #a3e4b8;
  color: #111;
  font-weight: 700;
}

.nav.indent {
  padding-left: 14px;
  margin-top: 2px;
}

.rule {
  position: absolute;
  left: 0;
  right: 0;
  top: 136px;
  height: 1px;
  background: #b9b9b9;
  z-index: 2;
}

.c-c { grid-column: 4; }
.c-d { grid-column: 5; }
.c-f { grid-column: 7; }
.c-g { grid-column: 8; }
.c-i { grid-column: 10; }
.c-j { grid-column: 11; }

.hn,
.ht {
  background: #d9d9d9;
  font-weight: 700;
  display: flex;
  align-items: center;
  padding: 0 0 2px 10px;
  color: #111;
  white-space: nowrap;
  margin-bottom: 1px;
}

.ht {
  border-left: 1px solid #fff;
}

.cn {
  background: #d9d9d9;
  border-bottom: 1px solid #efefef;
  display: flex;
  align-items: center;
  padding-left: 10px;
  color: #333;
}

.cn.last {
  align-items: flex-start;
  padding-top: 11px;
}

.ct {
  border-bottom: 1px solid #e4e4e4;
  border-right: 1px solid #e4e4e4;
  display: flex;
  align-items: center;
  padding-left: 10px;
  color: #222;
}

.cell-sel {
  position: absolute;
  left: 28px;
  top: 18px;
  width: 136px;
  height: 50px;
  border: 2px solid #2c6e4b;
  z-index: 3;
}

.cell-handle {
  position: absolute;
  right: -5px;
  bottom: -5px;
  width: 7px;
  height: 7px;
  background: #2c6e4b;
}

/* scrollbars */
.vscroll {
  width: 18px;
  margin-left: 3px;
  background: #f8f8f8;
  border-radius: 9px;
  display: flex;
  flex-direction: column;
  align-items: center;
  padding-top: 6px;
}

.arrow-up {
  width: 9px;
  height: 6px;
  background: #6e6e6e;
  clip-path: polygon(50% 0, 100% 100%, 0 100%);
}

.vthumb {
  width: 9px;
  height: 113px;
  margin-top: 5px;
  border-radius: 5px;
  background: #6e6e6e;
}

.arrow-down {
  width: 9px;
  height: 6px;
  margin-top: auto;
  margin-bottom: 4px;
  background: #6e6e6e;
  clip-path: polygon(0 0, 100% 0, 50% 100%);
}

.hbar {
  height: 33px;
  display: flex;
  align-items: center;
  border-bottom: 1px solid #d6d6d6;
  background: #f1f0f0;
}

.hdots {
  width: 32px;
}

.htrack {
  width: 1546px;
  height: 20px;
  background: #f8f8f8;
  border-radius: 10px;
  display: flex;
  align-items: center;
  padding: 0 6px;
}

.arrow-left {
  width: 6px;
  height: 9px;
  background: #6e6e6e;
  clip-path: polygon(100% 0, 100% 100%, 0 50%);
}

.hthumb {
  width: 1307px;
  height: 9px;
  margin-left: 6px;
  border-radius: 5px;
  background: #6e6e6e;
}

.arrow-right {
  width: 6px;
  height: 9px;
  margin-left: auto;
  background: #6e6e6e;
  clip-path: polygon(0 0, 100% 50%, 0 100%);
}

/* status bar */
.statusbar {
  height: 23px;
  display: flex;
  align-items: center;
  padding-left: 12px;
  font-size: 11px;
  color: #444;
}

.st-macro {
  margin-left: 21px;
}

.st-acc {
  margin-left: 15px;
}

.st-acc-t {
  margin-left: 2px;
  font-size: 10.400px;
  color: #333;
  white-space: nowrap;
}

.st-right {
  margin-left: auto;
  display: flex;
  align-items: center;
  height: 23px;
  padding-right: 9px;
}

.st-view {
  margin-left: 3px;
  width: 120px;
  font-size: 10.500px;
  white-space: nowrap;
}

.view-btn {
  width: 42px;
  height: 23px;
  display: flex;
  align-items: center;
  justify-content: center;
}

.view-btn.on {
  background: #dcdcdc;
}

.zoom-sign {
  width: 12px;
  text-align: center;
  font-size: 15px;
  color: #444;
}

.zoom-sign.minus {
  margin-left: 2px;
}

.slider {
  position: relative;
  width: 104px;
  height: 1px;
  margin: 0 2px 0 3px;
  background: #666;
}

.slider-mid {
  position: absolute;
  left: 53px;
  top: -3px;
  width: 1px;
  height: 7px;
  background: #666;
}

.slider-knob {
  position: absolute;
  left: 44px;
  top: -6px;
  width: 5px;
  height: 13px;
  background: #666;
}

.zoom-pct {
  margin-left: 13px;
  white-space: nowrap;
}
```
